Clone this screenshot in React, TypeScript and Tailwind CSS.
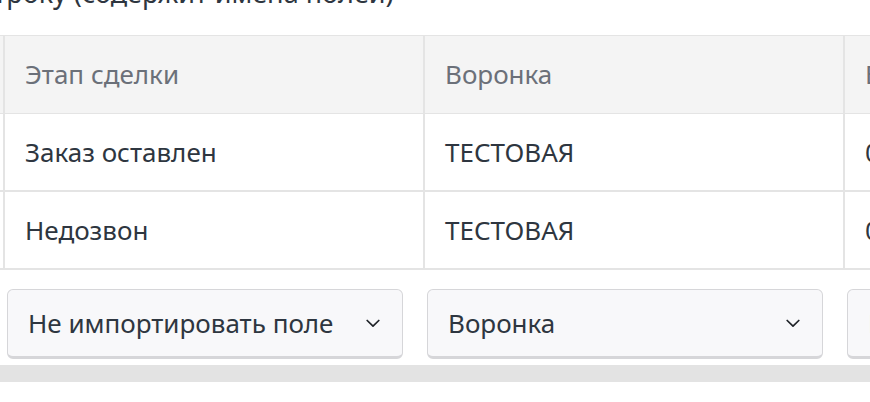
const columns = [
  { title: 'Название', rows: ['', ''], select: 'Название' },
  { title: 'Этап сделки', rows: ['Заказ оставлен', 'Недозвон'], select: 'Не импортировать поле' },
  { title: 'Воронка', rows: ['ТЕСТОВАЯ', 'ТЕСТОВАЯ'], select: 'Воронка' },
  { title: 'Бюджет', rows: ['0', '0'], select: 'Бюджет' },
];

function Chevron() {
  return (
    <svg width="14" height="9" viewBox="0 0 14 9" fill="none" className="shrink-0">
      <path d="M1.2 1.5 L7 7.2 L12.8 1.5" stroke="#1f2328" strokeWidth="1.7" strokeLinecap="round" strokeLinejoin="round" />
    </svg>
  );
}

export default function App() {
  return (
    <div className="h-[402px] w-[870px] overflow-hidden bg-white font-['Noto_Sans','Open_Sans',sans-serif] text-[#2e3640]">
      <p className="-mt-[27px] -ml-[128px] h-[40px] whitespace-nowrap text-[27px] leading-[40px]">
        Первую строку (содержит имена полей)
      </p>

      <div className="mt-[22px] -ml-[415px]">
        <div className="grid grid-cols-[420px_420px_420px_420px] border-y border-[#e4e4e4] bg-[#f4f4f4]">
          {columns.map((c) => (
            <div key={c.title} className="flex h-[77px] items-center border-r-2 border-[#e4e4e4] pl-5 text-[26px] text-[#6b7079]">
              {c.title}
            </div>
          ))}
        </div>
        {[0, 1].map((r) => (
          <div key={r} className="grid grid-cols-[420px_420px_420px_420px] border-b-2 border-[#e4e4e4]">
            {columns.map((c) => (
              <div key={c.title} className="flex h-[76px] items-center border-r-2 border-[#e4e4e4] pl-5 text-[26px]">
                {c.rows[r]}
              </div>
            ))}
          </div>
        ))}

        <div className="mt-[19px] grid grid-cols-[420px_420px_420px_420px]">
          {columns.map((c) => (
            <div key={c.title} className="pl-[2px]">
              <div className="flex h-[70px] w-[396px] items-center justify-between rounded-md border border-b-[3px] border-[#d6d6d9] bg-[#f8f8fa] pl-5 pr-[22px] text-[26px]">
                <span>{c.select}</span>
                <Chevron />
              </div>
            </div>
          ))}
        </div>
      </div>

      <div className="mt-[6px] h-[17px] w-full bg-[#e3e3e3]" />
    </div>
  );
}
